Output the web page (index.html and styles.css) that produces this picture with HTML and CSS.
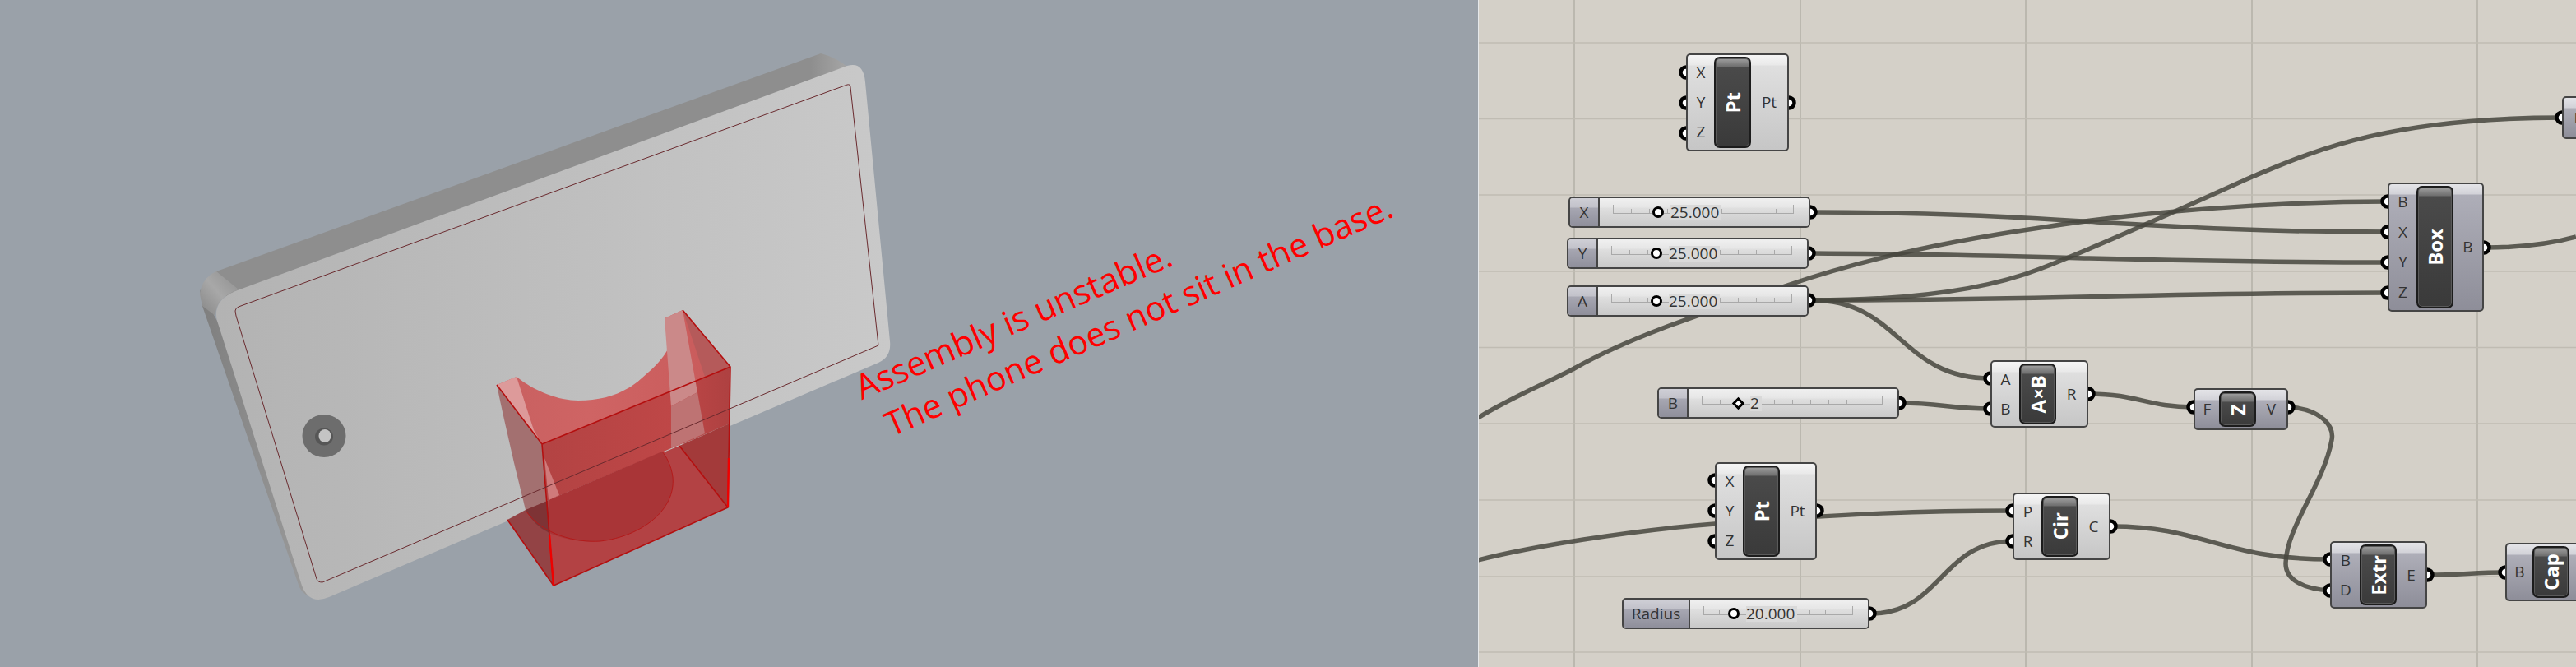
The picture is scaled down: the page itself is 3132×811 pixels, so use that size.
FILE: index.html
```html
<!DOCTYPE html>
<html lang="en">
<head>
<meta charset="utf-8">
<title>Phone stand assembly and Grasshopper definition</title>
<link rel="stylesheet" href="styles.css">
</head>
<body>
<main class="app">
  <section class="viewport">
    <svg class="scene" viewBox="0 0 1797 811" width="1797" height="811" aria-hidden="true">
      <defs>
        <linearGradient id="faceGrad" x1="0" y1="0" x2="1" y2="0">
          <stop offset="0" stop-color="#b3b3b3"/>
          <stop offset="1" stop-color="#c9c9c9"/>
        </linearGradient>
        <linearGradient id="leftGrad" x1="0" y1="0" x2="1" y2="0">
          <stop offset="0" stop-color="#7e7e7e"/>
          <stop offset="1" stop-color="#a0a0a0"/>
        </linearGradient>
        <linearGradient id="topGrad" x1="0" y1="0" x2="1" y2="0">
          <stop offset="0" stop-color="#8e8e8e"/>
          <stop offset="0.93" stop-color="#8e8e8e"/>
          <stop offset="1" stop-color="#ababab"/>
        </linearGradient>
        <linearGradient id="cornerGrad" x1="0" y1="1" x2="1" y2="0">
          <stop offset="0" stop-color="#858585"/>
          <stop offset="0.5" stop-color="#a8a8a8"/>
          <stop offset="1" stop-color="#8e8e8e"/>
        </linearGradient>
        <linearGradient id="frontGrad" x1="0" y1="0" x2="1" y2="0">
          <stop offset="0" stop-color="#b34343"/>
          <stop offset="0.7" stop-color="#bf4747"/>
          <stop offset="1" stop-color="#ae4141"/>
        </linearGradient>
        <linearGradient id="saddleGrad" x1="0" y1="0" x2="1" y2="0">
          <stop offset="0" stop-color="#c86060"/>
          <stop offset="0.4" stop-color="#cf6464"/>
          <stop offset="1" stop-color="#c85a5a"/>
        </linearGradient>
      </defs>
      <!-- plate body -->
      <path class="side-top" d="M263 330L998 65Q1020 70 1040 90L400 400L290 400Z"/>
      <path class="side-left" d="M243 352L246 372L364 714Q370 726 384 727L400 600L264 390Z"/>
      <path class="side-corner" d="M243 358Q245 338 263 330L290 352Q262 362 262 384L246 372Z"/>
      <path class="face" d="M286 354L1030 80Q1050 74 1052 100L1082 415Q1084 434 1068 441L400 726Q376 736 367 712L264 390Q258 366 286 354Z"/>
      <!-- washer -->
      <ellipse class="washer" cx="394" cy="530" rx="26.5" ry="26"/>
      <ellipse class="washer-rim" cx="394" cy="531" rx="11" ry="10.5"/>
      <ellipse class="washer-hole" cx="395" cy="530" rx="7.5" ry="8"/>
      <!-- translucent holder -->
      <path class="z-left" d="M604 468L659 540L665 609L639 620Q620 545 604 468Z"/>
      <path class="z-right" d="M830 377L888 446L887 515L830 540Z"/>
      <path class="z-saddle" d="M628 458C650 476 680 487 703 487C735 487 760 478 780 460C805 440 818 420 815 410L808 387L830 377L888 446L659 540L604 468Z"/>
      <path class="z-right" d="M830 377L888 446L857 458Z"/>
      <path class="z-front" d="M659 540L888 446L887 515L665 609Z"/>
      <path class="z-front-low" d="M826 542L887 515L885 617Z"/>
      <path class="z-floor-left" d="M617 632L639 620L667 608L673 712Z"/>
      <path class="z-floor-dark" d="M639 620L666 609L668 648Q650 640 639 620Z"/>
      <path class="z-floor" d="M666 609L826 542L885 617L673 712Z"/>
      <path class="z-circle" d="M667 608L805 549C810 555 816 565 818 580C822 620 780 652 730 658C705 660 685 655 668 648Z"/>
      <path class="z-strip-a" d="M604 468L628 458L649 523L659 540Z"/>
      <path class="z-strip-b" d="M808 387L830 377L848 477L816 494Z"/>
      <path class="z-strip-c" d="M816 494L848 477L857 527L816 545Z"/>
      <path class="z-strip-d" d="M662 557L680 602L667 608Z"/>
      <path class="z-arc" d="M640 622C660 650 700 660 730 658C780 652 822 620 818 580C816 565 810 555 805 549"/>
      <path class="z-edge" d="M604 468L659 540L888 446L830 377M888 446L885 617L673 712L617 632M659 540L673 712M826 542L885 617"/>
      <path class="z-bright" d="M668 650L673 712M886 557L885 617"/>
      <!-- seam of the plate, seen through everything -->
      <path class="seam" d="M287 384L286 378Q286 375 290 373L1030 103Q1034 102 1034 106L1068 420L392 708Q386 708 385 704Z"/>
    </svg>
    <p class="note note-a">Assembly is unstable.</p>
    <p class="note note-b">The phone does not sit in the base.</p>
  </section>

  <section class="canvas">
    <svg class="wires" viewBox="1798 0 1334 811" width="1334" height="811" aria-hidden="true">
      <g class="grid">
        <path d="M1914 0V811M2189 0V811M2463 0V811M2738 0V811M3012 0V811"/>
        <path d="M1798 52H3132M1798 144.500H3132M1798 237H3132M1798 330H3132M1798 422.500H3132M1798 515H3132M1798 608H3132M1798 701H3132M1798 793H3132"/>
      </g>
      <g class="wire">
        <path d="M2203 258C2500 258 2600 282 2903 282"/>
        <path d="M2203 308C2500 310 2600 319 2903 319"/>
        <path d="M2203 365C2500 365 2600 356 2903 356"/>
        <path d="M1797 508C1840 482 1880 466 1914 448C1990 405 2090 375 2173 347C2280 310 2390 290 2480 277C2600 258 2760 245 2903 245"/>
        <path d="M2203 365C2290 365 2400 358 2480 327C2560 296 2660 250 2738 215C2810 185 2900 143 3115 143"/>
        <path d="M1797 681C1860 665 1980 645 2085 637C2250 624 2340 621 2447 621"/>
        <path d="M2203 365C2310 365 2310 460 2420 460"/>
        <path d="M2310 490C2360 490 2370 497 2420 497"/>
        <path d="M2540 479C2600 479 2610 495 2667 495"/>
        <path d="M2784 495C2825 498 2838 520 2835 535C2825 590 2780 640 2779 685C2779 705 2800 716 2833 718"/>
        <path d="M2568 640C2680 640 2700 680 2833 680"/>
        <path d="M2275 746C2360 746 2360 658 2447 658"/>
        <path d="M2953 699C2990 699 3010 696 3046 696"/>
        <path d="M3022 301C3060 301 3100 297 3132 288"/>
      </g>
      <g class="ports">
        <circle cx="2050" cy="88" r="6.500"/><circle cx="2050" cy="125" r="6.500"/><circle cx="2050" cy="162" r="6.500"/><circle cx="2175" cy="125" r="6.500"/>
        <circle cx="2201" cy="258" r="6.500"/><circle cx="2199" cy="308" r="6.500"/><circle cx="2199" cy="365" r="6.500"/>
        <circle cx="2309" cy="490" r="6.500"/><circle cx="2273" cy="746" r="6.500"/>
        <circle cx="2085" cy="584" r="6.500"/><circle cx="2085" cy="621" r="6.500"/><circle cx="2085" cy="658" r="6.500"/><circle cx="2209" cy="621" r="6.500"/>
        <circle cx="2420" cy="460" r="6.500"/><circle cx="2420" cy="497" r="6.500"/><circle cx="2539" cy="479" r="6.500"/>
        <circle cx="2447" cy="621" r="6.500"/><circle cx="2447" cy="658" r="6.500"/><circle cx="2566" cy="640" r="6.500"/>
        <circle cx="2667" cy="495" r="6.500"/><circle cx="2782" cy="495" r="6.500"/>
        <circle cx="2833" cy="680" r="6.500"/><circle cx="2833" cy="718" r="6.500"/><circle cx="2951" cy="699" r="6.500"/>
        <circle cx="3046" cy="696" r="6.500"/>
        <circle cx="2903" cy="245" r="6.500"/><circle cx="2903" cy="282" r="6.500"/><circle cx="2903" cy="319" r="6.500"/><circle cx="2903" cy="356" r="6.500"/><circle cx="3020" cy="301" r="6.500"/>
        <circle cx="3115" cy="143" r="6.500"/>
      </g>
    </svg>

    <div class="node pos-pt1">
      <div class="pins in-34"><span>X</span><span>Y</span><span>Z</span></div>
      <div class="capsule"><b>Pt</b></div>
      <div class="pins out"><span>Pt</span></div>
    </div>

    <div class="slider pos-x">
      <span class="slabel">X</span>
      <div class="track pad-66"><i class="groove"></i><i class="grip"></i><span class="value">25.000</span></div>
    </div>
    <div class="slider pos-y">
      <span class="slabel">Y</span>
      <div class="track pad-66"><i class="groove"></i><i class="grip"></i><span class="value">25.000</span></div>
    </div>
    <div class="slider pos-a">
      <span class="slabel">A</span>
      <div class="track pad-66"><i class="groove"></i><i class="grip"></i><span class="value">25.000</span></div>
    </div>
    <div class="slider pos-b">
      <span class="slabel">B</span>
      <div class="track pad-56"><i class="groove"></i><i class="grip diamond"></i><span class="value">2</span></div>
    </div>
    <div class="slider pos-r">
      <span class="slabel wide">Radius</span>
      <div class="track pad-48"><i class="groove fine"></i><i class="grip"></i><span class="value">20.000</span></div>
    </div>

    <div class="node pos-pt2">
      <div class="pins in-34"><span>X</span><span>Y</span><span>Z</span></div>
      <div class="capsule"><b>Pt</b></div>
      <div class="pins out"><span>Pt</span></div>
    </div>

    <div class="node pos-axb">
      <div class="pins in-35"><span>A</span><span>B</span></div>
      <div class="capsule"><b>A×B</b></div>
      <div class="pins out"><span>R</span></div>
    </div>

    <div class="node pos-cir">
      <div class="pins in-35"><span>P</span><span>R</span></div>
      <div class="capsule"><b>Cir</b></div>
      <div class="pins out"><span>C</span></div>
    </div>

    <div class="node mauve pos-z">
      <div class="pins in-31"><span>F</span></div>
      <div class="capsule"><b>Z</b></div>
      <div class="pins out"><span>V</span></div>
    </div>

    <div class="node mauve pos-box">
      <div class="pins in-35"><span>B</span><span>X</span><span>Y</span><span>Z</span></div>
      <div class="capsule"><b>Box</b></div>
      <div class="pins out"><span>B</span></div>
    </div>

    <div class="node mauve pos-extr">
      <div class="pins in-36"><span>B</span><span>D</span></div>
      <div class="capsule"><b>Extr</b></div>
      <div class="pins out"><span>E</span></div>
    </div>

    <div class="node mauve pos-cap">
      <div class="pins in-33"><span>B</span></div>
      <div class="capsule"><b>Cap</b></div>
    </div>

    <div class="node mauve pos-far">
      <div class="pins in-far"><span>F</span></div>
    </div>
  </section>
</main>
</body>
</html>
```

FILE: styles.css
```css
* { box-sizing: border-box; }

html, body {
  margin: 0;
  padding: 0;
  width: 3132px;
  height: 811px;
  overflow: hidden;
  background: #9aa1a9;
}

.app {
  display: flex;
  width: 3132px;
  height: 811px;
  overflow: hidden;
}

/* ---------- 3D viewport ---------- */
.viewport {
  position: relative;
  flex: 0 0 1797px;
  height: 811px;
  background: #9aa1a9;
  overflow: hidden;
}

.scene { display: block; }

.side-top { fill: url(#topGrad); }
.side-corner { fill: url(#cornerGrad); }
.side-left { fill: url(#leftGrad); }
.face { fill: url(#faceGrad); }
.washer { fill: #6d6d6d; }
.washer-rim { fill: #565656; }
.washer-hole { fill: #c4c4c4; }

.z-left { fill: #a37070; }
.z-right { fill: #b55a5a; }
.z-saddle { fill: url(#saddleGrad); }
.z-front { fill: url(#frontGrad); }
.z-front-low { fill: #a33a3a; }
.z-floor-left { fill: #934345; }
.z-floor-dark { fill: #7e3335; }
.z-floor { fill: #b34244; }
.z-circle { fill: #a93537; }
.z-strip-a { fill: #dd9a9a; }
.z-strip-b { fill: #cb8989; }
.z-strip-c { fill: #be7373; }
.z-strip-d { fill: #cf7b7b; }
.z-arc { fill: none; stroke: #b31a1a; stroke-width: 1; }
.z-edge { fill: none; stroke: #b40f0f; stroke-width: 1.6; stroke-linejoin: round; }
.z-bright { fill: none; stroke: #f00000; stroke-width: 2.4; }
.seam { fill: none; stroke: #6a2a2e; stroke-width: 1; }

.note {
  position: absolute;
  margin: 0;
  color: #ff0000;
  font-family: "Open Sans", sans-serif;
  line-height: 1;
  white-space: nowrap;
  transform-origin: 0 100%;
}

.note-a { left: 1050px; top: 450px; font-size: 41.500px; transform: rotate(-23.4deg); }
.note-b { left: 1086px; top: 495px; font-size: 41px; transform: rotate(-23.7deg); }

/* ---------- Grasshopper canvas ---------- */
.canvas {
  position: relative;
  flex: 1;
  height: 811px;
  margin-left: 1px;
  background: #d4d0c8;
  overflow: hidden;
  font-family: "Open Sans", sans-serif;
  box-shadow: -1px 0 0 #e6e8ea;
}

.wires { position: absolute; left: 0; top: 0; display: block; }

.grid path { fill: none; stroke: #c0bcb3; stroke-width: 1.5; }
.grid path:first-child { stroke: #b3b0a7; }

.wire path {
  fill: none;
  stroke: #47473e;
  stroke-opacity: 0.85;
  stroke-width: 5.500;
}

.ports circle { fill: #fff; stroke: #000; stroke-width: 4.500; }

.node {
  position: absolute;
  display: flex;
  padding-block: 3px;
  border: 2px solid #454545;
  border-radius: 5px;
  background:
    linear-gradient(#f5f5f5 0, #e9e9e9 12px, #dfdfdf 13px, #c6c6c6 100%);
  color: #333;
  font-size: 19px;
  line-height: 1;
}

.node.mauve {
  background:
    linear-gradient(#e4e4e8 0, #d2d2d8 12px, #aeaeb8 13px, #8e8e99 100%);
}

.pins {
  display: flex;
  flex-direction: column;
  justify-content: space-around;
  align-items: center;
}

.in-31 { flex: 0 0 29px; }
.in-33 { flex: 0 0 31px; }
.in-34 { flex: 0 0 32px; }
.in-35 { flex: 0 0 33px; }
.in-36 { flex: 0 0 34px; }
.in-far { flex: 0 0 35px; }
.out { flex: 1; }

.capsule {
  flex: 0 0 45px;
  margin-block: -1px;
  display: flex;
  align-items: center;
  justify-content: center;
  border: 2px solid #1c1c1c;
  border-radius: 7px;
  background:
    linear-gradient(#a0a0a0 0, #6e6e6e 10px, #4a4a4a 11px, #3a3a3a 100%);
  box-shadow: inset 0 0 0 1px #5a5a5a;
}

.capsule b {
  color: #fff;
  font-size: 24px;
  font-weight: 700;
  line-height: 1;
  white-space: nowrap;
  writing-mode: vertical-rl;
  text-orientation: sideways;
  transform: rotate(180deg);
}

.slider {
  position: absolute;
  display: flex;
  height: 38px;
  border: 2px solid #454545;
  border-radius: 5px;
  overflow: hidden;
  color: #333;
  font-size: 19px;
  line-height: 1;
}

.slabel {
  flex: 0 0 36px;
  display: flex;
  align-items: center;
  justify-content: center;
  border-right: 2px solid #454545;
  background:
    linear-gradient(#cfcfd6 0, #c2c2ca 11px, #a7a7b2 12px, #8f8f9b 100%);
}

.slabel.wide { flex-basis: 81px; }

.track {
  position: relative;
  flex: 1;
  display: flex;
  align-items: center;
  gap: 8px;
  background:
    linear-gradient(#f0f0f0 0, #e6e6e6 11px, #dfdfdf 12px, #c9c9c9 100%);
}

.pad-66 { padding-left: 64px; }
.pad-56 { padding-left: 54px; }
.pad-48 { padding-left: 46px; }

.groove {
  position: absolute;
  left: 16px;
  right: 18px;
  top: 8px;
  height: 11px;
  border: 1px solid #a9a9a9;
  border-top: 0;
  background:
    repeating-linear-gradient(90deg, transparent 0 21px, #a9a9a9 21px 22px) left bottom / 100% 5px no-repeat;
}

.groove.fine {
  background:
    repeating-linear-gradient(90deg, transparent 0 17.500px, #a9a9a9 17.500px 18.500px) left bottom / 100% 5px no-repeat;
}

.grip {
  position: relative;
  flex: 0 0 14px;
  height: 14px;
  border: 3.500px solid #000;
  border-radius: 50%;
  background: #fff;
}

.grip.diamond {
  flex-basis: 11px;
  height: 11px;
  margin-inline: 1px;
  border-width: 3px;
  border-radius: 0;
  transform: rotate(45deg);
}

.value {
  position: relative;
  padding-right: 3px;
  background: #d9d9d9;
}

/* free-canvas placement of each component */
.pos-pt1 { left: 252px; top: 65px; width: 125px; height: 119px; }
.pos-pt2 { left: 287px; top: 562px; width: 124px; height: 119px; }
.pos-axb { left: 622px; top: 438px; width: 119px; height: 82px; }
.pos-cir { left: 649px; top: 599px; width: 119px; height: 82px; }
.pos-z { left: 869px; top: 472px; width: 115px; height: 51px; }
.pos-box { left: 1105px; top: 222px; width: 117px; height: 157px; }
.pos-extr { left: 1035px; top: 658px; width: 118px; height: 82px; }
.pos-cap { left: 1248px; top: 660px; width: 120px; height: 71px; }
.pos-far { left: 1317px; top: 117px; width: 60px; height: 52px; }

.pos-x { left: 109px; top: 239px; width: 294px; }
.pos-y { left: 107px; top: 289px; width: 294px; }
.pos-a { left: 107px; top: 347px; width: 294px; }
.pos-b { left: 217px; top: 471px; width: 294px; }
.pos-r { left: 174px; top: 727px; width: 301px; }
```
